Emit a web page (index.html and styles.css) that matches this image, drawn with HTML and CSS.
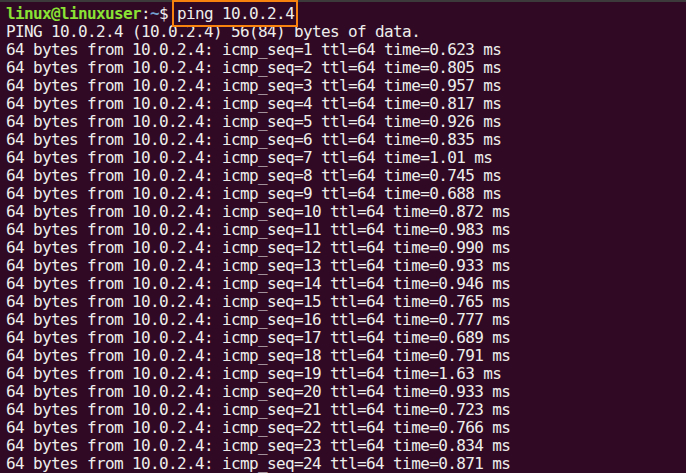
FILE: index.html
```html
<!DOCTYPE html>
<html>
<head>
<meta charset="utf-8">
<link rel="stylesheet" href="styles.css">
</head>
<body>
<div class="topbar"></div>
<pre class="term"><span class="line"><span class="user">linux@linuxuser</span>:<span class="path">~</span>$ <span class="cmd">ping 10.0.2.4</span></span>
<span class="line">PING 10.0.2.4 (10.0.2.4) 56(84) bytes of data.</span>
<span class="line">64 bytes from 10.0.2.4: icmp_seq=1 ttl=64 time=0.623 ms</span>
<span class="line">64 bytes from 10.0.2.4: icmp_seq=2 ttl=64 time=0.805 ms</span>
<span class="line">64 bytes from 10.0.2.4: icmp_seq=3 ttl=64 time=0.957 ms</span>
<span class="line">64 bytes from 10.0.2.4: icmp_seq=4 ttl=64 time=0.817 ms</span>
<span class="line">64 bytes from 10.0.2.4: icmp_seq=5 ttl=64 time=0.926 ms</span>
<span class="line">64 bytes from 10.0.2.4: icmp_seq=6 ttl=64 time=0.835 ms</span>
<span class="line">64 bytes from 10.0.2.4: icmp_seq=7 ttl=64 time=1.01 ms</span>
<span class="line">64 bytes from 10.0.2.4: icmp_seq=8 ttl=64 time=0.745 ms</span>
<span class="line">64 bytes from 10.0.2.4: icmp_seq=9 ttl=64 time=0.688 ms</span>
<span class="line">64 bytes from 10.0.2.4: icmp_seq=10 ttl=64 time=0.872 ms</span>
<span class="line">64 bytes from 10.0.2.4: icmp_seq=11 ttl=64 time=0.983 ms</span>
<span class="line">64 bytes from 10.0.2.4: icmp_seq=12 ttl=64 time=0.990 ms</span>
<span class="line">64 bytes from 10.0.2.4: icmp_seq=13 ttl=64 time=0.933 ms</span>
<span class="line">64 bytes from 10.0.2.4: icmp_seq=14 ttl=64 time=0.946 ms</span>
<span class="line">64 bytes from 10.0.2.4: icmp_seq=15 ttl=64 time=0.765 ms</span>
<span class="line">64 bytes from 10.0.2.4: icmp_seq=16 ttl=64 time=0.777 ms</span>
<span class="line">64 bytes from 10.0.2.4: icmp_seq=17 ttl=64 time=0.689 ms</span>
<span class="line">64 bytes from 10.0.2.4: icmp_seq=18 ttl=64 time=0.791 ms</span>
<span class="line">64 bytes from 10.0.2.4: icmp_seq=19 ttl=64 time=1.63 ms</span>
<span class="line">64 bytes from 10.0.2.4: icmp_seq=20 ttl=64 time=0.933 ms</span>
<span class="line">64 bytes from 10.0.2.4: icmp_seq=21 ttl=64 time=0.723 ms</span>
<span class="line">64 bytes from 10.0.2.4: icmp_seq=22 ttl=64 time=0.766 ms</span>
<span class="line">64 bytes from 10.0.2.4: icmp_seq=23 ttl=64 time=0.834 ms</span>
<span class="line">64 bytes from 10.0.2.4: icmp_seq=24 ttl=64 time=0.871 ms</span></pre>
</body>
</html>
```
FILE: styles.css
```css
html, body {
  margin: 0;
  padding: 0;
  background: #300a24;
  height: 100%;
  overflow: hidden;
}
.topbar {
  height: 2px;
  background: #3c3a3b;
}
.term {
  margin: 0;
  padding: 3px 0 0 6px;
  font-family: "DejaVu Sans Mono", monospace;
  font-size: 16px;
  letter-spacing: -0.63px;
  line-height: 18px;
  color: #eeeeec;
  display: flex;
  flex-direction: column;
}
.line {
  display: block;
  height: 18px;
  white-space: pre;
}
.user {
  color: #8ae234;
  font-weight: bold;
}
.path {
  color: #729fcf;
  font-weight: bold;
}
.cmd {
  position: relative;
}
.cmd::after {
  content: "";
  position: absolute;
  left: -5px;
  right: -4px;
  top: -4px;
  bottom: -4px;
  border: 2px solid #f7820e;
}
```
